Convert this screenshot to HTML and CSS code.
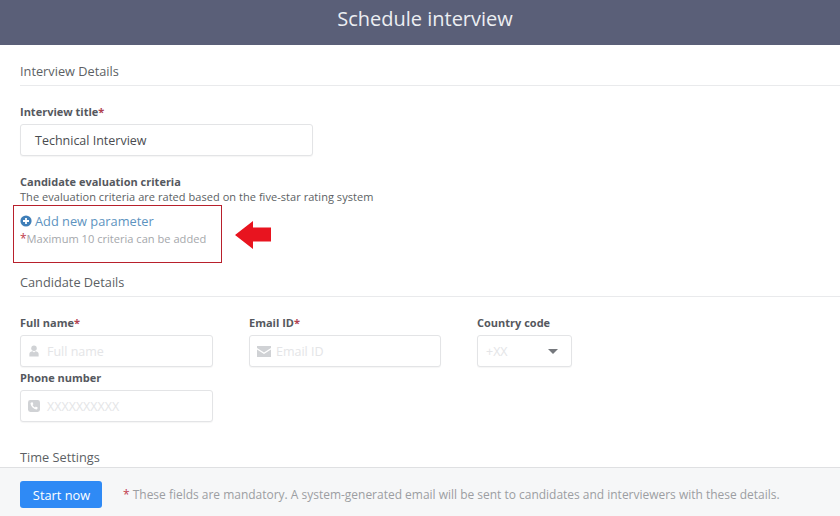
FILE: index.html
```html
<!DOCTYPE html>
<html lang="en">
<head>
<meta charset="utf-8">
<title>Schedule interview</title>
<link rel="stylesheet" href="styles.css">
</head>
<body>
<div class="page">
  <header class="topbar">Schedule interview</header>
  <main class="content">
    <h2 class="section-title">Interview Details</h2>
    <div class="field title-field">
      <label class="label">Interview title<span class="req">*</span></label>
      <div class="input input-title">Technical Interview</div>
    </div>
    <div class="criteria">
      <div class="label">Candidate evaluation criteria</div>
      <div class="hint">The evaluation criteria are rated based on the five-star rating system</div>
      <a class="add-link">
        <svg class="add-icon" viewBox="0 0 12 12" width="12" height="12"><circle cx="6" cy="6" r="5.6" fill="#3f7fb8"/><path d="M6 3v6M3 6h6" stroke="#fff" stroke-width="1.8"/></svg>
        <span>Add new parameter</span>
      </a>
      <div class="max-note"><span class="req-big">*</span>Maximum 10 criteria can be added</div>
      <div class="callout"></div>
      <svg class="arrow" viewBox="0 0 36 28" width="36" height="28"><path d="M0 14 L18 0 V6.500 H36 V20.500 H18 V28 Z" fill="#e8141f"/></svg>
    </div>
    <h2 class="section-title candidate-title">Candidate Details</h2>
    <div class="grid">
      <div class="field">
        <label class="label">Full name<span class="req">*</span></label>
        <div class="input input-icon">
          <svg class="icon" viewBox="-1 0 14 13" width="12" height="12"><circle cx="6" cy="3.4" r="3.200" fill="#d0d2d5"/><path d="M0.6 13V9.600C0.6 7.800 2.600 7 4.400 6.800L6 8.200 7.600 6.800C9.400 7 11.400 7.800 11.400 9.600V13Z" fill="#d0d2d5"/></svg>
          <span class="placeholder">Full name</span>
        </div>
      </div>
      <div class="field">
        <label class="label">Email ID<span class="req">*</span></label>
        <div class="input input-icon">
          <svg class="icon icon-wide" viewBox="0 0 14 11" width="14" height="11"><path d="M0 0H14V2L7 6.5 0 2Z" fill="#d0d2d5"/><path d="M0 3.6L7 8 14 3.6V11H0Z" fill="#d0d2d5"/></svg>
          <span class="placeholder">Email ID</span>
        </div>
      </div>
      <div class="field">
        <label class="label">Country code</label>
        <div class="input select">
          <span class="placeholder">+XX</span>
          <span class="caret"></span>
        </div>
      </div>
      <div class="field">
        <label class="label">Phone number</label>
        <div class="input input-icon">
          <svg class="icon" viewBox="0 0 12 12" width="12" height="12"><rect width="12" height="12" rx="2.4" fill="#d0d2d5"/><path d="M3.2 2.6L4.6 2.3 5.4 4.2 4.5 5C5 6 5.900 6.900 7 7.500L7.800 6.600 9.700 7.400 9.400 8.800C9.300 9.300 8.800 9.600 8.300 9.500 5.500 9 3 6.500 2.500 3.700 2.400 3.200 2.700 2.700 3.200 2.600Z" fill="#fff"/></svg>
          <span class="placeholder">XXXXXXXXXX</span>
        </div>
      </div>
    </div>
    <h2 class="section-title time-title">Time Settings</h2>
  </main>
  <footer class="footer">
    <button class="btn" type="button">Start now</button>
    <p class="footnote"><span class="req-foot">*</span> These fields are mandatory. A system-generated email will be sent to candidates and interviewers with these details.</p>
  </footer>
</div>
</body>
</html>
```

FILE: styles.css
```css
* { box-sizing: border-box; }
html, body { margin: 0; padding: 0; }
body { background: #fff; font-family: "Open Sans", "Noto Sans", sans-serif; color: #444; }
.page { width: 840px; height: 516px; display: flex; flex-direction: column; overflow: hidden; }
.topbar { flex: 0 0 45px; background: #5a5f78; color: #eceef2; font-size: 20px; line-height: 38px; text-align: center; padding-left: 10px; }
.content { flex: 1 1 auto; min-height: 0; overflow: hidden; padding: 16px 0 0 20px; }
.section-title { margin: 0; height: 25px; border-bottom: 1px solid #e9eaec; font-size: 12.75px; font-weight: 400; line-height: 20px; color: #5c5f64; }
.title-field { margin-top: 18px; }
.label { display: block; font-size: 11px; font-weight: 700; line-height: 15px; color: #55585e; }
.req { color: #b0404f; }
.input { margin-top: 5px; height: 32px; background: #fff; border: 1px solid #e3e4e6; border-radius: 3px; box-shadow: 0 1px 1px rgba(0,0,0,.04); font-size: 12.5px; color: #4a4c50; display: flex; align-items: center; }
.input-title { width: 293px; padding-left: 14px; }
.criteria { position: relative; margin-top: 18px; height: 98px; }
.hint { font-size: 11px; line-height: 15px; color: #5c5f64; letter-spacing: .045px; }
.add-link { display: flex; align-items: center; gap: 3px; margin-top: 8px; font-size: 12.8px; line-height: 18px; color: #5d93c0; }
.add-icon { flex: none; }
.max-note { font-size: 11.1px; line-height: 16px; color: #a5a7ab; margin-top: 1px; }
.req-big { color: #c0394b; font-size: 12px; }
.callout { position: absolute; left: -7px; top: 31px; width: 209px; height: 58px; border: 1px solid #b8202c; }
.arrow { position: absolute; left: 215px; top: 47px; }
.grid { display: grid; grid-template-columns: 193px 192px 95px; column-gap: 36px; row-gap: 3px; margin-top: 18px; }
.input-icon { padding-left: 7px; gap: 7px; }
.icon { flex: none; }
.icon-wide { margin-right: -2px; }
.placeholder { font-size: 12.5px; color: #e4e5e7; }
.select { padding: 0 13px 0 8px; justify-content: space-between; }
.caret { width: 0; height: 0; border-left: 5px solid transparent; border-right: 5px solid transparent; border-top: 5px solid #75787d; }
.time-title { margin-top: 25px; border-bottom: none; }
.footer { flex: 0 0 49px; background: #f6f7f8; border-top: 1px solid #dfe0e2; display: flex; align-items: center; padding: 5px 0 0 20px; }
.btn { width: 82px; height: 27px; border: none; border-radius: 3px; background: #2f8af5; color: #fff; font-family: inherit; font-size: 12.8px; padding: 0 0 0 1px; }
.footnote { margin: 0 0 0 21px; font-size: 11.98px; color: #9c9ea2; white-space: nowrap; }
.req-foot { color: #c0394b; }
```
